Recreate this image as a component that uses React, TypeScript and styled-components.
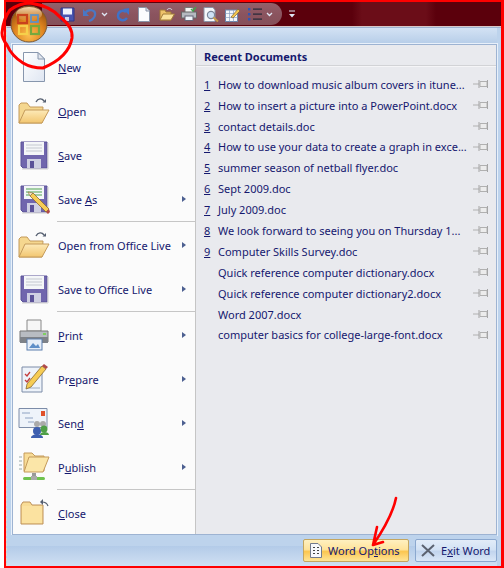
import React from "react";
import styled, { createGlobalStyle } from "styled-components";

const Global = createGlobalStyle`
  html, body { margin: 0; padding: 0; background: #fff; }
  #root { width: 504px; height: 568px; overflow: hidden; }
`;

const Shell = styled.div`
  position: relative;
  width: 504px;
  height: 568px;
  box-sizing: border-box;
  padding-left: 4px;
  background: #fff;
  font-family: "Noto Sans", "Open Sans", sans-serif;
  font-size: 11px;
  color: #15186e;
  display: flex;
  flex-direction: column;
`;
const Inner = styled.div`
  flex: 1;
  display: flex;
  flex-direction: column;
  border: solid #f00;
  border-width: 2px 3px 2px 2px;
  min-height: 0;
`;
const TitleBar = styled.div`
  height: 24px;
  flex: none;
  display: flex;
  align-items: center;
  padding-left: 36px;
  border-bottom: 1px solid #d8c8c8;
  background:
    linear-gradient(90deg, transparent 346px, #6b0d18 356px, #6b0d18 420px, transparent 430px),
    #5b000c;
`;
const Pill = styled.div`
  height: 22px;
  width: 240px;
  box-sizing: border-box;
  border-radius: 0 12px 12px 0;
  background: linear-gradient(#93606a, #8b545f 50%, #855059);
  display: flex;
  align-items: center;
  padding-left: 18px;
`;
const Overflow = styled.div`
  margin-left: 6px;
  width: 8px;
  display: flex;
  align-items: center;
`;
const Frame = styled.div`
  flex: 1;
  min-height: 0;
  display: flex;
  flex-direction: column;
  padding: 0 4px 0 0;
  border-left: 1px dashed #e4dcc8;
  border-top: 1px solid #9db3d2;
  background: #bdd3ec;
`;
const Band = styled.div`
  height: 16px;
  flex: none;
  background: linear-gradient(#d3e2f4, #b6cde8);
`;
const Panel = styled.div`
  height: 491px;
  flex: none;
  margin-left: 5px;
  display: flex;
  box-sizing: border-box;
  border: 1px solid #9db3d2;
  outline: 1px solid #e8f0fa;
  background: #fafafa;
`;
const LeftPane = styled.div`
  width: 182px;
  flex: none;
  border-right: 1px solid #c5c5c5;
  background: #fbfbfb;
`;
const Item = styled.div`
  height: 44px;
  display: flex;
  align-items: center;
  box-sizing: border-box;
`;
const ItemIcon = styled.div`
  width: 45px;
  flex: none;
  display: flex;
  justify-content: center;
  padding-right: 4px;
  box-sizing: border-box;
`;
const ItemLabel = styled.div`
  flex: 1;
  white-space: nowrap;
`;
const Arrow = styled.div`
  width: 0;
  height: 0;
  margin-right: 9px;
  border-left: 4px solid #4c5f90;
  border-top: 3.5px solid transparent;
  border-bottom: 3.5px solid transparent;
`;
const Sep = styled.div`
  height: 2px;
  margin-left: 44px;
  background: #c6c6c6;
  border-bottom: 1px solid #fbfbfb;
  box-sizing: border-box;
`;
const RightPane = styled.div`
  flex: 1;
  background: #e9eaee;
`;
const Heading = styled.div`
  height: 21px;
  box-sizing: border-box;
  padding: 3px 0 0 8px;
  display: flex;
  align-items: center;
  font-weight: 700;
  font-size: 11px;
  color: #15186e;
  border-bottom: 1px solid #d2d3d6;
  box-shadow: 0 1px 0 #f5f5f7;
`;
const Rows = styled.div`
  padding-top: 7.8px;
`;
const Row = styled.div`
  height: 20.9px;
  display: flex;
  align-items: center;
  white-space: nowrap;
  padding-left: 8px;
`;
const Num = styled.u`
  width: 14px;
  flex: none;
  text-underline-offset: 1px;
`;
const DocName = styled.span<{ $indent?: boolean }>`
  flex: 1;
  margin-left: ${(p) => (p.$indent ? "14px" : "0")};
`;
const PinWrap = styled.span`
  width: 16px;
  margin-right: 7px;
  flex: none;
  display: flex;
`;
const Footer = styled.div`
  flex: 1;
  min-height: 0;
  display: flex;
  justify-content: flex-end;
  align-items: center;
  gap: 6px;
  padding: 1px 0 2px 0;
  background: linear-gradient(#bdd3ec 0 11px, #b3cbe8 11px, #d0e0f3 100%);
`;
const Btn = styled.div<{ $hot?: boolean; $w: number }>`
  width: ${(p) => p.$w}px;
  height: 23px;
  box-sizing: border-box;
  display: flex;
  align-items: center;
  gap: 5px;
  padding-left: 5px;
  border-radius: 2px;
  border: 1px solid ${(p) => (p.$hot ? "#c4a660" : "#8ba8cf")};
  background: ${(p) =>
    p.$hot
      ? "linear-gradient(#fff0c0, #ffe39a 45%, #fbc651 55%, #ffe596)"
      : "linear-gradient(#e2ecf8, #d3e2f4 45%, #c2d5ee 55%, #dae7f7)"};
`;
const BtnText = styled.span<{ $ml?: number }>`
  margin-left: ${(p) => p.$ml ?? 0}px;
`;
const Orb = styled.svg`
  position: absolute;
  left: 10px;
  top: 5px;
`;
const Ink = styled.svg`
  position: absolute;
  left: 0;
  top: 0;
  pointer-events: none;
`;
const Tb = styled.svg<{ $ml?: number }>`
  flex: none;
  margin-left: ${(p) => p.$ml ?? 0}px;
`;

const Doc = () => (
  <svg width="24" height="32" viewBox="0 0 24 32">
    <defs>
      <linearGradient id="dg" x1="0" y1="0" x2="1" y2="1">
        <stop offset="0" stopColor="#fff" />
        <stop offset="1" stopColor="#dfe6f2" />
      </linearGradient>
    </defs>
    <path d="M1.5 1.5H16L22.5 8V30.5H1.5Z" fill="url(#dg)" stroke="#8796ad" />
    <path d="M16 1.5V8H22.5Z" fill="#e3e7ee" stroke="#8796ad" />
  </svg>
);
const Folder = () => (
  <svg width="32" height="32" viewBox="0 0 32 32">
    <defs>
      <linearGradient id="fg" x1="0" y1="0" x2="0" y2="1">
        <stop offset="0" stopColor="#fdeab8" />
        <stop offset="1" stopColor="#f2c670" />
      </linearGradient>
    </defs>
    <path d="M1 10V28H24L25 12H12L9 8H3Z" fill="#f5d78f" stroke="#c49a5a" />
    <path d="M7 15H31L24 28H1Z" fill="url(#fg)" stroke="#c49a5a" />
    <path d="M18 7C20 3 24 3 26 6" fill="none" stroke="#555f70" strokeWidth="1.4" />
    <path d="M24.5 7.5H28V4Z" fill="#555f70" />
  </svg>
);
const Floppy = ({ pencil = false }: { pencil?: boolean }) => (
  <svg width="32" height="32" viewBox="0 0 32 32">
    <path d="M3 3H29V29H5L3 27Z" fill="#7066ad" stroke="#5b5298" />
    <rect x="6" y="3" width="20" height="13" fill="#f4f6f8" />
    {[6, 9, 12].map((y) => (
      <path key={y} d={`M8 ${y}H24`} stroke={pencil ? "#4ea24e" : "#c4c8d0"} strokeWidth="1" />
    ))}
    <rect x="9" y="20" width="14" height="9" fill="#cfd0e2" />
    <rect x="12" y="22" width="4" height="7" fill="#5b5298" />
    <path d="M4 30H30V4" fill="none" stroke="#d0d0d0" />
    {pencil && (
      <g>
        <path d="M12 13L15 10L31 26L28 29Z" fill="#f6cc55" stroke="#8a6a30" strokeWidth=".8" />
        <path d="M12 13L10 9L15 10Z" fill="#f3e4c4" stroke="#8a6a30" strokeWidth=".6" />
        <path d="M28 29L31 26L32 29L30 31Z" fill="#b04a4a" />
      </g>
    )}
  </svg>
);
const Printer = () => (
  <svg width="30" height="32" viewBox="0 0 30 32">
    <path d="M8 1H22V12H8Z" fill="#f6f6f6" stroke="#888" />
    <path d="M1 12H29V23H1Z" fill="#b8bcc2" stroke="#777" />
    <path d="M1 18H29V24H1Z" fill="#7e8288" />
    <rect x="24" y="14" width="3" height="2" fill="#7fcf60" />
    <rect x="8" y="20" width="15" height="11" fill="#e6eef8" stroke="#5d7fae" />
    <path d="M10 29L14 24L17 27L19 25L21 29Z" fill="#5f8fc8" />
  </svg>
);
const Prepare = () => (
  <svg width="32" height="32" viewBox="0 0 32 32">
    <path d="M4 4H24V29H4Z" fill="#eef3fa" stroke="#7c8ca8" />
    <path d="M7 11l2 2 3-4M7 17l2 2 3-4" fill="none" stroke="#c43c3c" strokeWidth="1.3" />
    <path d="M8 25H22" stroke="#a0adc0" />
    <path d="M9 21L24 3L28 6L13 24L8 26Z" fill="#f6cc55" stroke="#8a6a30" strokeWidth=".8" />
    <path d="M24 3L26 1L30 4L28 6Z" fill="#b04a4a" />
  </svg>
);
const Send = () => (
  <svg width="32" height="32" viewBox="0 0 32 32">
    <path d="M1 1.5H29V20.5H1Z" fill="#eef3fa" stroke="#7c8ca8" />
    <rect x="23" y="4" width="4" height="5" fill="#e0502a" />
    <path d="M4 6H12M7 11H15M10 15H16" stroke="#8ea2c2" />
    <circle cx="19" cy="17" r="3" fill="#aaa" />
    <circle cx="25" cy="17" r="3" fill="#aaa" />
    <circle cx="19" cy="24" r="4" fill="#3e5fb0" />
    <path d="M13 31C13 26 25 26 25 31Z" fill="#3e5fb0" />
    <circle cx="26" cy="22" r="3.5" fill="#4f9f47" />
    <path d="M22 28C22 24 31 24 31 28Z" fill="#4f9f47" />
  </svg>
);
const Publish = () => (
  <svg width="32" height="32" viewBox="0 0 32 32">
    <path d="M1 6H4M1 10H4M1 14H4M1 18H4" stroke="#9aa" />
    <path d="M6 20V2H14L17 5H26V20Z" fill="#f8dc96" stroke="#c49a5a" />
    <path d="M11 6H31L25 21H6Z" fill="#fbe6a8" stroke="#c49a5a" />
    <rect x="14" y="22" width="4" height="5" fill="#999" />
    <rect x="5" y="26" width="9" height="3" rx="1.5" fill="#6fc24e" />
    <rect x="18" y="26" width="9" height="3" rx="1.5" fill="#6fc24e" />
    <rect x="13" y="25" width="6" height="4" fill="#aaa" />
  </svg>
);
const CloseFolder = () => (
  <svg width="32" height="32" viewBox="0 0 32 32">
    <path d="M3 26V8L5 5H12L14 8H25V27H3Z" fill="#f8dc96" stroke="#bd9058" />
    <path d="M4 9H24V26H4Z" fill="#fbe2a0" />
    <path d="M30 9C29 6 27 5 24 5" fill="none" stroke="#555f70" strokeWidth="1.2" />
    <path d="M25 2V8L22 5Z" fill="#555f70" />
  </svg>
);
const Pin = () => (
  <svg width="16" height="10" viewBox="0 0 16 10">
    <path d="M0 5H6" stroke="#b0b0b0" />
    <path d="M6 1V9" stroke="#a5a5a5" />
    <path d="M7 2.5H14V7.5H7Z" fill="#ececec" stroke="#b0b0b0" />
    <path d="M14.5 1V9" stroke="#a5a5a5" />
  </svg>
);
const Chevron = ({ ml }: { ml: number }) => (
  <Tb $ml={ml} width="7" height="5" viewBox="0 0 7 5">
    <path d="M1 1L3.5 3.5L6 1" fill="none" stroke="#dfe7f4" strokeWidth="1.3" />
  </Tb>
);

const Toolbar = () => (
  <Pill>
    <Tb width="15" height="15" viewBox="0 0 15 15">
      <path d="M1 1H14V14H1Z" fill="#4a56b0" stroke="#2c3688" />
      <rect x="3" y="1.5" width="9" height="6" fill="#eef2fb" />
      <rect x="5" y="10" width="4" height="4" fill="#cdd2ea" />
    </Tb>
    <Tb $ml={8} width="14" height="15" viewBox="0 0 14 15">
      <path d="M2 6C6 1 13 3 12 8C11.5 11 9 13 6 14" fill="none" stroke="#4a77c4" strokeWidth="2.2" />
      <path d="M0 2V9H6Z" fill="#4a77c4" />
    </Tb>
    <Chevron ml={4} />
    <Tb $ml={8} width="14" height="15" viewBox="0 0 14 15">
      <path d="M10 5C6 2 2 5 2 9C2 13 8 15 11 11" fill="none" stroke="#3f72c8" strokeWidth="2.4" />
      <path d="M7 2L13 1V8Z" fill="#3f72c8" />
    </Tb>
    <Tb $ml={8} width="12" height="15" viewBox="0 0 12 15">
      <path d="M.5.5H8L11.5 4V14.5H.5Z" fill="#fbfcfe" stroke="#8a94a8" />
      <path d="M8 .5V4H11.5" fill="#dfe4ee" stroke="#8a94a8" />
    </Tb>
    <Tb $ml={9} width="16" height="14" viewBox="0 0 16 14">
      <path d="M1 13V3H6L7 5H12V13Z" fill="#eec26a" stroke="#a17a38" />
      <path d="M4 7H15.5L12 13H1Z" fill="#fbe29c" stroke="#a17a38" />
      <path d="M8 3C9 1 12 1 13 3" fill="none" stroke="#d5dce8" />
    </Tb>
    <Tb $ml={6} width="16" height="14" viewBox="0 0 16 14">
      <rect x="4" y="0.5" width="8" height="5" fill="#f4f4f4" stroke="#777" />
      <rect x="0.5" y="5" width="15" height="6" fill="#b5b9c0" stroke="#666" />
      <rect x="4" y="9" width="8" height="4.5" fill="#eef3fa" stroke="#667" />
      <path d="M10 2l2 2 3-4" fill="none" stroke="#3fa64a" strokeWidth="1.4" />
    </Tb>
    <Tb $ml={6} width="16" height="15" viewBox="0 0 16 15">
      <path d="M1 .5H10L12 3V14.5H1Z" fill="#f6f8fb" stroke="#8a94a8" />
      <circle cx="8" cy="8" r="3.6" fill="#cfe2f5" stroke="#7a8598" strokeWidth="1.2" />
      <path d="M10.5 10.5L15 14.5" stroke="#c69a4a" strokeWidth="2" />
    </Tb>
    <Tb $ml={6} width="16" height="15" viewBox="0 0 16 15">
      <rect x="0.5" y="3" width="12" height="11.5" fill="#f4f7fb" stroke="#6e86ab" />
      <path d="M.5 6.5H12.5M.5 10.5H12.5M4.5 3V14.5M8.5 3V14.5" stroke="#8aa0c2" strokeWidth=".7" />
      <path d="M6 10L13 2L15 4L8 11Z" fill="#f3c64f" stroke="#6d5525" strokeWidth=".6" />
    </Tb>
    <Tb $ml={7} width="14" height="13" viewBox="0 0 14 13">
      {[1, 6, 11].map((y) => (
        <g key={y}>
          <rect x="0" y={y - 1} width="2.4" height="2.4" fill="#2f55b8" />
          <rect x="5" y={y - 0.5} width="9" height="1.2" fill="#232838" />
        </g>
      ))}
    </Tb>
    <Chevron ml={4} />
  </Pill>
);

type E = { icon: React.ReactNode; label: React.ReactNode; sub?: boolean; sep?: boolean };
const items: E[] = [
  { icon: <Doc />, label: <><u>N</u>ew</> },
  { icon: <Folder />, label: <><u>O</u>pen</> },
  { icon: <Floppy />, label: <><u>S</u>ave</> },
  { icon: <Floppy pencil />, label: <>Save <u>A</u>s</>, sub: true, sep: true },
  { icon: <Folder />, label: "Open from Office Live", sub: true },
  { icon: <Floppy />, label: "Save to Office Live", sub: true, sep: true },
  { icon: <Printer />, label: <><u>P</u>rint</>, sub: true },
  { icon: <Prepare />, label: <>Pr<u>e</u>pare</>, sub: true },
  { icon: <Send />, label: <>Sen<u>d</u></>, sub: true },
  { icon: <Publish />, label: <>P<u>u</u>blish</>, sub: true, sep: true },
  { icon: <CloseFolder />, label: <><u>C</u>lose</> },
];

const docs = [
  "How to download music album covers in itune...",
  "How to insert a picture into a PowerPoint.docx",
  "contact details.doc",
  "How to use your data to create a graph in exce...",
  "summer season of netball flyer.doc",
  "Sept 2009.doc",
  "July 2009.doc",
  "We look forward to seeing you on Thursday 1...",
  "Computer Skills Survey.doc",
  "Quick reference computer dictionary.docx",
  "Quick reference computer dictionary2.docx",
  "Word 2007.docx",
  "computer basics for college-large-font.docx",
];

export default function App() {
  return (
    <Shell>
      <Global />
      <Inner>
        <TitleBar>
          <Toolbar />
          <Overflow>
            <svg width="8" height="9" viewBox="0 0 8 9">
              <path d="M1 1H7" stroke="#dfe7f4" />
              <path d="M1 4H7L4 7.5Z" fill="#dfe7f4" />
            </svg>
          </Overflow>
        </TitleBar>
        <Frame>
          <Band />
          <Panel>
            <LeftPane>
              {items.map((it, i) => (
                <React.Fragment key={i}>
                  <Item>
                    <ItemIcon>{it.icon}</ItemIcon>
                    <ItemLabel>{it.label}</ItemLabel>
                    {it.sub && <Arrow />}
                  </Item>
                  {it.sep && <Sep />}
                </React.Fragment>
              ))}
            </LeftPane>
            <RightPane>
              <Heading>Recent Documents</Heading>
              <Rows>
                {docs.map((d, i) => (
                  <Row key={d}>
                    {i < 9 && <Num>{i + 1}</Num>}
                    <DocName $indent={i >= 9}>{d}</DocName>
                    <PinWrap>
                      <Pin />
                    </PinWrap>
                  </Row>
                ))}
              </Rows>
            </RightPane>
          </Panel>
          <Footer>
            <Btn $hot $w={106}>
              <svg width="14" height="15" viewBox="0 0 14 15">
                <path d="M1.5 .5H9L12.5 4V14.5H1.5Z" fill="#f7f8fb" stroke="#727a8c" />
                <path d="M4 4.5H6M8 4.5H10M4 7.5H6M8 7.5H10M4 10.5H6M8 10.5H10" stroke="#444" />
              </svg>
              <BtnText>
                Word Op<u>t</u>ions
              </BtnText>
            </Btn>
            <Btn $w={82}>
              <svg width="14" height="13" viewBox="0 0 14 13">
                <path d="M1 1L13 12M13 1L1 12" stroke="#5b6270" strokeWidth="2" />
              </svg>
              <BtnText $ml={1}>
                E<u>x</u>it Word
              </BtnText>
            </Btn>
          </Footer>
        </Frame>
      </Inner>
      <Orb width="38" height="38" viewBox="0 0 38 38">
        <defs>
          <radialGradient id="og" cx="50%" cy="80%" r="75%">
            <stop offset="0" stopColor="#fbbf50" />
            <stop offset="0.55" stopColor="#e0841f" />
            <stop offset="1" stopColor="#94500f" />
          </radialGradient>
          <linearGradient id="oh" x1="0" y1="0" x2="0" y2="1">
            <stop offset="0" stopColor="#ffe9c8" stopOpacity=".9" />
            <stop offset="1" stopColor="#ffc880" stopOpacity=".1" />
          </linearGradient>
        </defs>
        <circle cx="19" cy="19" r="18" fill="url(#og)" stroke="#7a5a3a" />
        <ellipse cx="19" cy="9" rx="13" ry="7" fill="url(#oh)" />
        <rect x="8" y="10" width="9" height="8" fill="none" stroke="#c9421c" strokeWidth="2.2" />
        <rect x="21" y="10" width="7" height="7" fill="none" stroke="#5f92c4" strokeWidth="1.8" />
        <rect x="9" y="21" width="8" height="8" fill="none" stroke="#f6d04a" strokeWidth="2.2" />
        <rect x="21" y="21" width="8" height="8" fill="none" stroke="#76a83e" strokeWidth="2.2" />
      </Orb>
      <Ink width="504" height="568" viewBox="0 0 504 568">
        <path
          d="M10 10C17 5 24 3 30 3C44 5 54 10 60 17C68 23 73 30 72 38C70 50 62 60 43 68C34 68 28 66 23 63C15 58 10 52 7 45C3 40 2 36 2 33C3 22 6 15 10 10"
          fill="none"
          stroke="#f00"
          strokeWidth="3"
          strokeLinecap="round"
        />
        <path
          d="M396 498C394 508 386 526 373 545M377 527L373 545L383 542"
          fill="none"
          stroke="#f00"
          strokeWidth="2.6"
          strokeLinecap="round"
          strokeLinejoin="round"
        />
      </Ink>
    </Shell>
  );
}
